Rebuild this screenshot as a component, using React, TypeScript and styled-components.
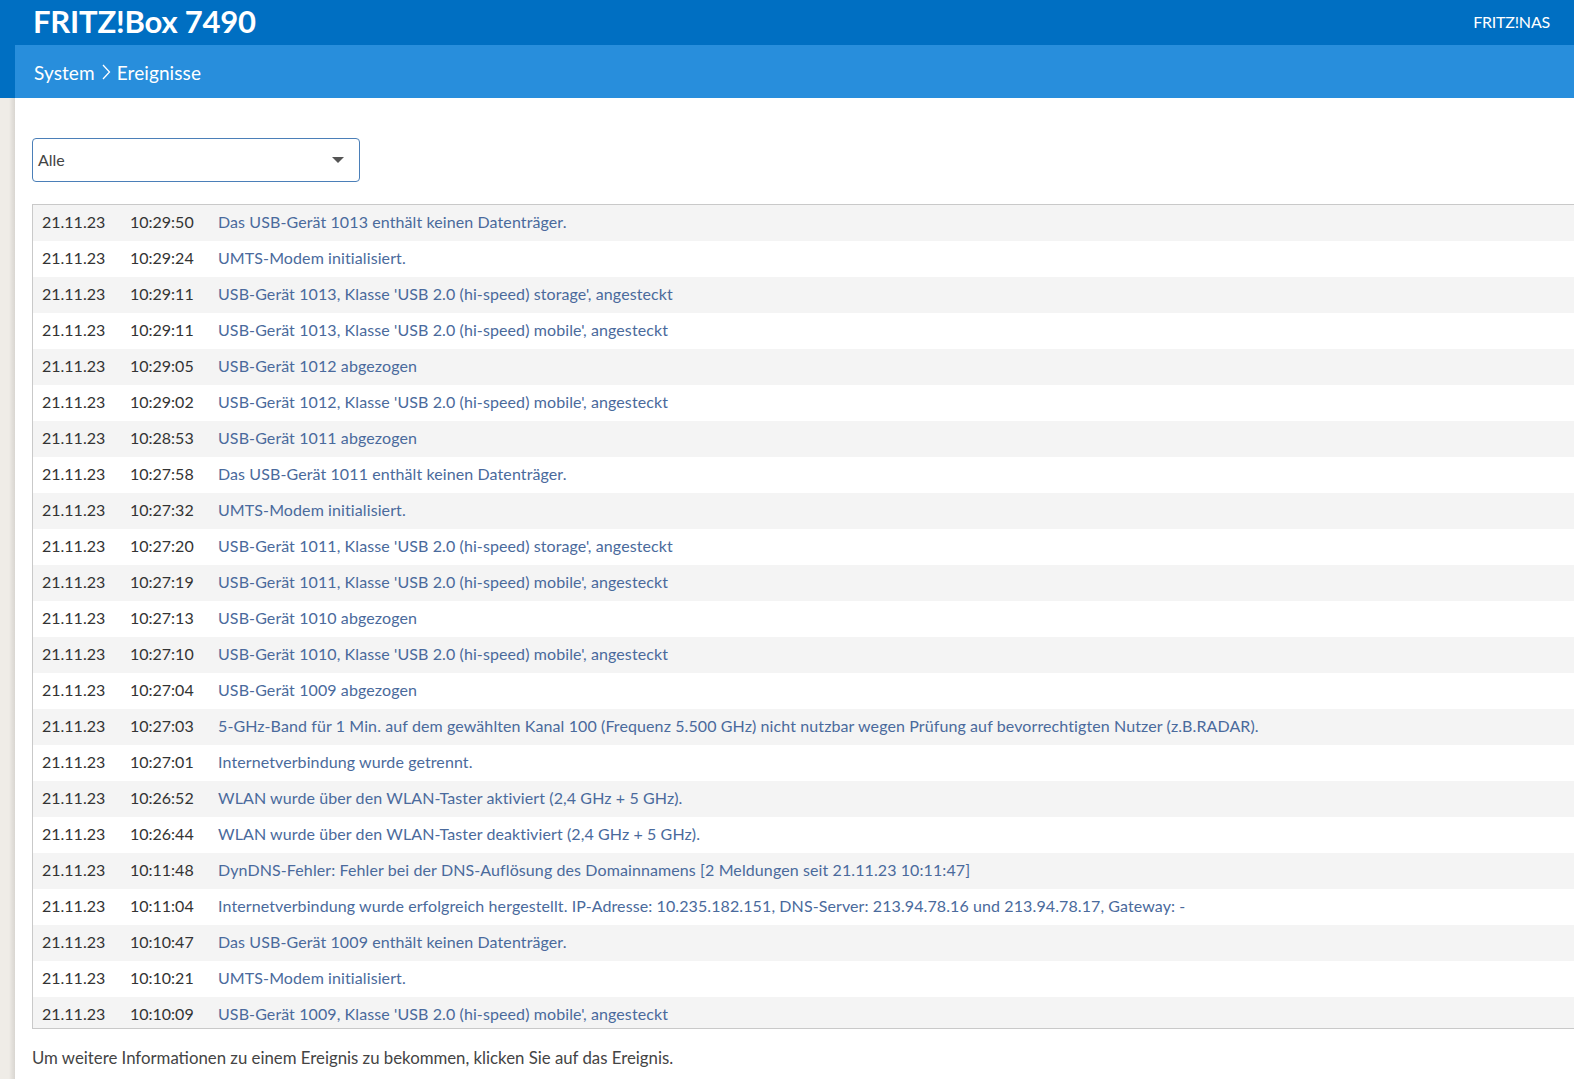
import React from 'react';
import styled, { createGlobalStyle } from 'styled-components';

const events = [
    ['21.11.23', '10:29:50', 'Das USB-Gerät 1013 enthält keinen Datenträger.'],
    ['21.11.23', '10:29:24', 'UMTS-Modem initialisiert.'],
    ['21.11.23', '10:29:11', "USB-Gerät 1013, Klasse 'USB 2.0 (hi-speed) storage', angesteckt"],
    ['21.11.23', '10:29:11', "USB-Gerät 1013, Klasse 'USB 2.0 (hi-speed) mobile', angesteckt"],
    ['21.11.23', '10:29:05', 'USB-Gerät 1012 abgezogen'],
    ['21.11.23', '10:29:02', "USB-Gerät 1012, Klasse 'USB 2.0 (hi-speed) mobile', angesteckt"],
    ['21.11.23', '10:28:53', 'USB-Gerät 1011 abgezogen'],
    ['21.11.23', '10:27:58', 'Das USB-Gerät 1011 enthält keinen Datenträger.'],
    ['21.11.23', '10:27:32', 'UMTS-Modem initialisiert.'],
    ['21.11.23', '10:27:20', "USB-Gerät 1011, Klasse 'USB 2.0 (hi-speed) storage', angesteckt"],
    ['21.11.23', '10:27:19', "USB-Gerät 1011, Klasse 'USB 2.0 (hi-speed) mobile', angesteckt"],
    ['21.11.23', '10:27:13', 'USB-Gerät 1010 abgezogen'],
    ['21.11.23', '10:27:10', "USB-Gerät 1010, Klasse 'USB 2.0 (hi-speed) mobile', angesteckt"],
    ['21.11.23', '10:27:04', 'USB-Gerät 1009 abgezogen'],
    ['21.11.23', '10:27:03', '5-GHz-Band für 1 Min. auf dem gewählten Kanal 100 (Frequenz 5.500 GHz) nicht nutzbar wegen Prüfung auf bevorrechtigten Nutzer (z.B.RADAR).'],
    ['21.11.23', '10:27:01', 'Internetverbindung wurde getrennt.'],
    ['21.11.23', '10:26:52', 'WLAN wurde über den WLAN-Taster aktiviert (2,4 GHz + 5 GHz).'],
    ['21.11.23', '10:26:44', 'WLAN wurde über den WLAN-Taster deaktiviert (2,4 GHz + 5 GHz).'],
    ['21.11.23', '10:11:48', 'DynDNS-Fehler: Fehler bei der DNS-Auflösung des Domainnamens [2 Meldungen seit 21.11.23 10:11:47]'],
    ['21.11.23', '10:11:04', 'Internetverbindung wurde erfolgreich hergestellt. IP-Adresse: 10.235.182.151, DNS-Server: 213.94.78.16 und 213.94.78.17, Gateway: -'],
    ['21.11.23', '10:10:47', 'Das USB-Gerät 1009 enthält keinen Datenträger.'],
    ['21.11.23', '10:10:21', 'UMTS-Modem initialisiert.'],
    ['21.11.23', '10:10:09', "USB-Gerät 1009, Klasse 'USB 2.0 (hi-speed) mobile', angesteckt"],
];

export default function App() {
    return (
        <>
            <GlobalStyle />
            <Page>
                <TopBar>
                    <Title>FRITZ!Box 7490</Title>
                    <NasLink>FRITZ!NAS</NasLink>
                </TopBar>
                <Body>
                    <Side />
                    <Main>
                        <Breadcrumb>
                            <span>System</span>
                            <svg width="12" height="18" viewBox="0 0 12 18">
                                <path d="M3 2 L9.5 9 L3 16" fill="none" stroke="#fff" strokeWidth="1.3" />
                            </svg>
                            <span>Ereignisse</span>
                        </Breadcrumb>
                        <Content>
                            <Select>
                                <span>Alle</span>
                                <Caret />
                            </Select>
                            <Table>
                                {events.map(([date, time, text], i) => (
                                    <Row key={i} $odd={i % 2 === 0}>
                                        <DateCell>{date}</DateCell>
                                        <TimeCell>{time}</TimeCell>
                                        <Message>{text}</Message>
                                    </Row>
                                ))}
                            </Table>
                            <Hint>Um weitere Informationen zu einem Ereignis zu bekommen, klicken Sie auf das Ereignis.</Hint>
                        </Content>
                    </Main>
                </Body>
            </Page>
        </>
    );
}

const GlobalStyle = createGlobalStyle`
    html, body {
        margin: 0;
        padding: 0;
        overflow: hidden;
        background: #fff;
    }
    body {
        font-family: Lato, 'Liberation Sans', sans-serif;
        font-size: 16px;
        color: #333;
    }
`;

const Page = styled.div`
    display: flex;
    flex-direction: column;
    width: 1574px;
    height: 1079px;
`;

const TopBar = styled.header`
    height: 45px;
    flex: none;
    box-sizing: border-box;
    padding: 0 24px 3px 33px;
    background: #006fc2;
    display: flex;
    align-items: center;
    justify-content: space-between;
    color: #fff;
`;

const Title = styled.h1`
    margin: 0;
    font-size: 31px;
    font-weight: 700;
    letter-spacing: -0.2px;
    line-height: 40px;
`;

const NasLink = styled.span`
    font-size: 16px;
    letter-spacing: -0.2px;
`;

const Body = styled.div`
    flex: 1;
    display: flex;
    min-height: 0;
`;

const Side = styled.div`
    width: 15px;
    flex: none;
    background:
        linear-gradient(#006fc2, #006fc2) top / 100% 53px no-repeat,
        linear-gradient(90deg, #efece7 0, #efece7 9px, #e3e0db 12px, #d9d6d1 15px);
`;

const Main = styled.main`
    flex: 1;
    display: flex;
    flex-direction: column;
    min-width: 0;
`;

const Breadcrumb = styled.nav`
    height: 53px;
    flex: none;
    box-sizing: border-box;
    padding: 1px 0 0 19px;
    background: #288edc;
    display: flex;
    align-items: center;
    gap: 5px;
    color: #fff;
    font-size: 19px;
    letter-spacing: 0.1px;
`;

const Content = styled.section`
    flex: 1;
    padding: 40px 0 0 17px;
    display: flex;
    flex-direction: column;
    min-height: 0;
`;

const Select = styled.div`
    width: 328px;
    height: 44px;
    box-sizing: border-box;
    border: 1px solid #4b7fb8;
    border-radius: 4px;
    display: flex;
    align-items: center;
    justify-content: space-between;
    padding: 0 15px 1px 5px;
    color: #444;
    font-size: 16px;
`;

const Caret = styled.span`
    width: 0;
    height: 0;
    border-left: 6px solid transparent;
    border-right: 6px solid transparent;
    border-top: 6px solid #555;
`;

const Table = styled.div`
    margin-top: 22px;
    height: 825px;
    flex: none;
    overflow: hidden;
    border: 1px solid #c9c9c9;
    border-right: none;
    box-sizing: border-box;
`;

const Row = styled.div<{ $odd: boolean }>`
    height: 36px;
    box-sizing: border-box;
    padding-bottom: 4px;
    display: flex;
    align-items: center;
    background: ${({ $odd }) => ($odd ? '#f4f4f4' : '#fff')};
    white-space: nowrap;
`;

const DateCell = styled.span`
    width: 88px;
    padding-left: 9px;
    flex: none;
    color: #333;
`;

const TimeCell = styled.span`
    width: 88px;
    flex: none;
    color: #333;
`;

const Message = styled.span`
    color: #4a6a9c;
    letter-spacing: 0.1px;
`;

const Hint = styled.p`
    margin: 18px 0 0 0;
    color: #444;
    font-size: 16.8px;
`;
